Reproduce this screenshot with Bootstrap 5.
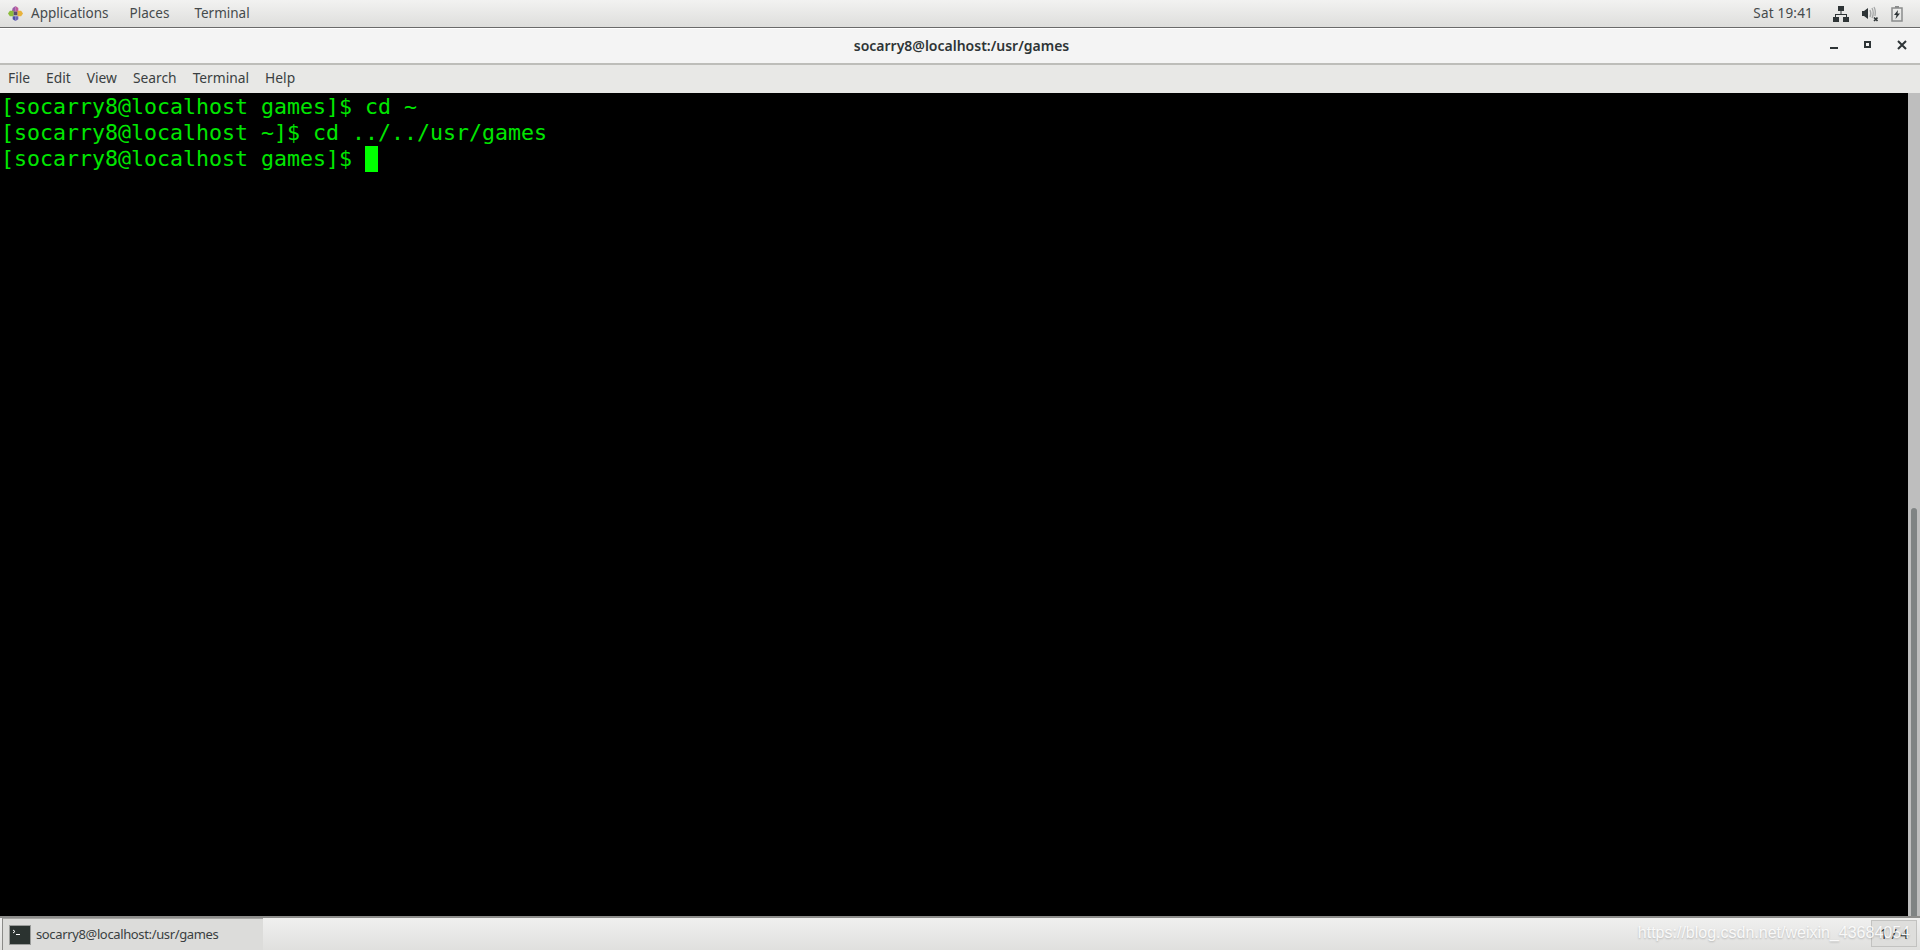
<!DOCTYPE html>
<html lang="en">
<head>
<meta charset="utf-8">
<title>socarry8@localhost:/usr/games</title>
<link href="https://cdn.jsdelivr.net/npm/bootstrap@5.3.0/dist/css/bootstrap.min.css" rel="stylesheet">
<style>
html,body{height:950px;overflow:hidden;background:#000}
body{font-family:"Noto Sans",sans-serif;color:#2e3436}
.shell{height:950px}
.topbar{height:28px;background:linear-gradient(#f2f2f1,#dededc);border-bottom:1px solid #6a6a6a;font-size:13.5px;color:#454a4c;flex:none}
.topbar .left-items{padding-left:8px}
.logo{width:15px;height:15px;margin-right:8px}
.app-item{line-height:24px;margin-bottom:2px}
.app-places{margin-left:21px}
.app-term{margin-left:25px}
.clock{margin-right:20px;line-height:24px;margin-bottom:2px;letter-spacing:.2px}
.tray{gap:13px;margin-right:17px}
.titlebar{height:37px;background:#f4f4f4;border-top:1px solid #fff;border-bottom:2px solid #bdbdb9;font-size:14px;font-weight:600;color:#2e3436;flex:none}
.title-text{margin-bottom:2px;margin-right:-3px}
.win-btns{right:1px;top:0;height:100%}
.win-btn{width:34px;height:100%;padding-bottom:2px}
.menubar{height:28px;background:#e8e8e6;font-size:13.8px;color:#3a3f41;padding-left:8px;padding-bottom:1px;gap:16px;flex:none}
.termwrap{flex:1 1 auto;min-height:0;background:#000}
.termtext{flex:1 1 auto;margin:0;padding:1px 0 0 1px;font-family:"DejaVu Sans Mono",monospace;font-size:21.6px;line-height:26px;color:#00e600;white-space:pre;overflow:hidden}
.cursor{display:inline-block;width:13px;height:26px;background:#00ff00;vertical-align:-6px}
.sbar{width:12px;background:#bebebe;flex:none}
.sthumb{width:6px;margin-left:3px;margin-top:auto;height:408px;background:#7f8383;border-radius:3px 3px 0 0}
.bottombar{height:34px;background:linear-gradient(#f0f0ef,#e0e0de);border-top:2px solid #8d8d8b;font-size:13px;flex:none;position:relative}
.taskitem{width:261px;margin-left:2px;background:#dcdcda;border-left:1px solid #8a8a88;border-top:1px solid #a5a5a3;padding-left:6px;color:#3a3f41;gap:5px;letter-spacing:-.36px}
.termicon{width:22px;height:20px}
.pager{width:46px;height:27px;margin-right:3px;margin-top:2px;border:1px solid #c2c2c0;background:#dededc;color:#2e3436;font-size:14px}
.mark-wm{position:absolute;right:10px;top:3px;font-family:"Liberation Sans",sans-serif;font-size:16px;color:rgba(255,255,255,.88);text-shadow:0 1px 2px rgba(0,0,0,.22);white-space:nowrap}
</style>
</head>
<body>
<div class="shell d-flex flex-column">
  <div class="topbar d-flex align-items-center justify-content-between">
    <div class="left-items d-flex align-items-center">
      <svg class="logo" viewBox="0 0 16 16"><path d="M8 0l3 2v4H8z" fill="#c25a9a"/><path d="M5 2l3-2v6H4z" fill="#9a5aa8"/><path d="M10 5h4l2 3-2 3h-4z" fill="#e8b23c"/><path d="M5 11h3v5l-3-2z" fill="#4c4fa8"/><path d="M8 11h3v3l-3 2z" fill="#6a62b8"/><path d="M2 5h4v6H2L0 8z" fill="#8cbc3c"/><rect x="6" y="6" width="4" height="4" fill="#5a4a6a"/></svg>
      <span class="app-item">Applications</span>
      <span class="app-item app-places">Places</span>
      <span class="app-item app-term">Terminal</span>
    </div>
    <div class="d-flex align-items-center">
      <span class="clock">Sat 19:41</span>
      <div class="tray d-flex align-items-center">
        <svg width="16" height="16" viewBox="0 0 16 16" fill="#2e3436"><rect x="5" y="0" width="6" height="5"/><rect x="0" y="11" width="6" height="5"/><rect x="10" y="11" width="6" height="5"/><path d="M7.500 5h1v3H14v3h-1V9H3v2H2V8h5.500z"/></svg>
        <svg width="16" height="16" viewBox="0 0 16 16" fill="#2e3436"><path d="M0 5h2l4-3v11L2 10H0z"/><path d="M8 4c1 2 1 5 0 7M10 2c1.500 3 1.500 7 0 10M12 1c1.500 2.500 1.500 6 1 9" fill="none" stroke="#a4a6a6" stroke-width="1.300"/><path d="M12 11.500l3.500 3.500m0-3.500L12 15" stroke="#2e3436" stroke-width="1.600"/></svg>
        <svg width="12" height="16" viewBox="0 0 12 16"><rect x="1" y="2" width="10" height="13" fill="none" stroke="#8a8c8c" stroke-width="1.500"/><rect x="4" y="0" width="4" height="2" fill="#8a8c8c"/><path d="M7 4L3 9h2.500L4.500 13 9 7.500H6.500z" fill="#2e3436"/></svg>
      </div>
    </div>
  </div>
  <div class="titlebar position-relative d-flex align-items-center justify-content-center">
    <span class="title-text">socarry8@localhost:/usr/games</span>
    <div class="win-btns position-absolute d-flex align-items-center">
      <div class="win-btn d-flex align-items-center justify-content-center"><svg width="10" height="10" viewBox="0 0 10 10" fill="#2e3436"><rect x="1" y="7" width="8" height="2"/></svg></div>
      <div class="win-btn d-flex align-items-center justify-content-center"><svg width="8" height="8" viewBox="0 0 8 8"><rect x="1" y="1" width="5" height="5" fill="none" stroke="#2e3436" stroke-width="2"/></svg></div>
      <div class="win-btn d-flex align-items-center justify-content-center"><svg width="10" height="10" viewBox="0 0 10 10"><path d="M1 1l8 8m0-8l-8 8" stroke="#2e3436" stroke-width="2"/></svg></div>
    </div>
  </div>
  <div class="menubar d-flex align-items-center">
    <span>File</span><span>Edit</span><span>View</span><span>Search</span><span>Terminal</span><span>Help</span>
  </div>
  <div class="termwrap d-flex">
    <pre class="termtext">[socarry8@localhost games]$ cd ~
[socarry8@localhost ~]$ cd ../../usr/games
[socarry8@localhost games]$ <span class="cursor"></span></pre>
    <div class="sbar d-flex flex-column"><div class="sthumb"></div></div>
  </div>
  <div class="bottombar d-flex justify-content-between">
    <div class="taskitem d-flex align-items-center">
      <svg class="termicon" viewBox="0 0 22 20"><rect x=".5" y=".5" width="21" height="19" fill="#2b3330" stroke="#9a9c9a"/><path d="M4 5l2 1.500L4 8" fill="none" stroke="#fff"/><rect x="7" y="9" width="4" height="1" fill="#fff"/></svg>
      <span>socarry8@localhost:/usr/games</span>
    </div>
    <div class="pager d-flex align-items-center justify-content-center">1 / 4</div>
    <div class="mark-wm">https://blog.csdn.net/weixin_43684054</div>
  </div>
</div>
<script src="https://cdn.jsdelivr.net/npm/bootstrap@5.3.0/dist/js/bootstrap.bundle.min.js"></script>
</body>
</html>
